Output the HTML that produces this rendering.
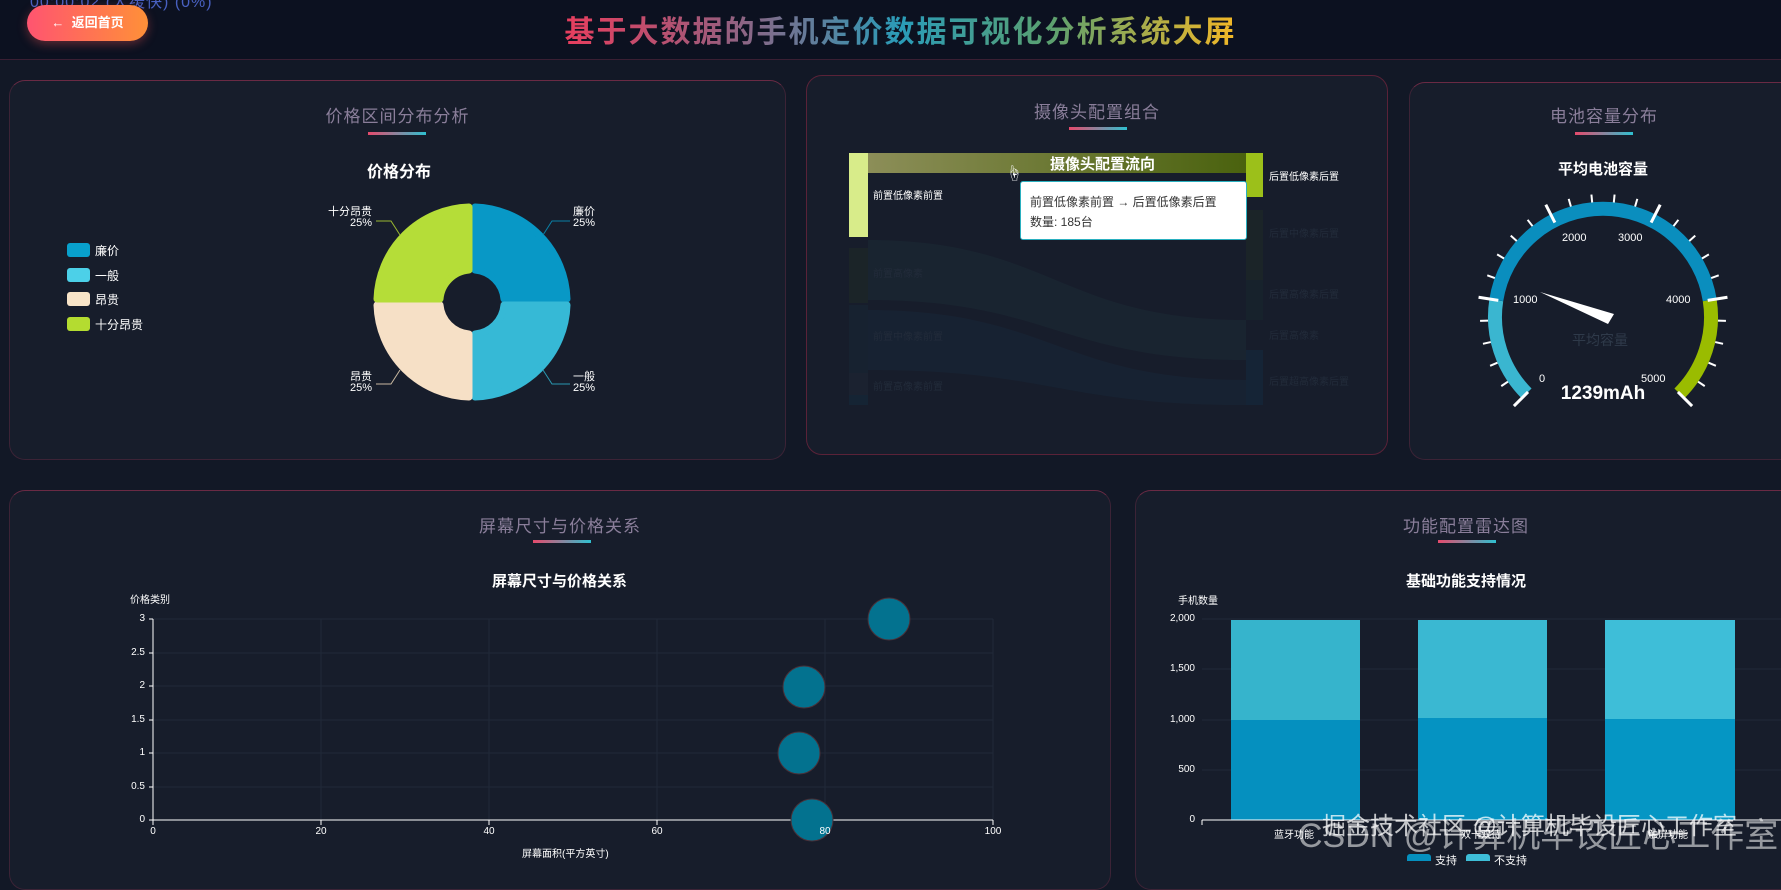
<!DOCTYPE html>
<html><head><meta charset="utf-8">
<style>
*{margin:0;padding:0;box-sizing:border-box}
body{width:1781px;height:861px;overflow:hidden;background:#121826;font-family:"Liberation Sans","Noto Sans CJK SC",sans-serif;color:#fff;position:relative}
.hdr{position:absolute;left:0;top:0;width:1781px;height:60px;background:#0c1120;border-bottom:1px solid #3a1f33}
.panel{position:absolute;background:#171d2b;border:1px solid #3c2336;border-radius:16px;border-top-color:#6a2a44}
.pt{position:absolute;left:0;right:0;text-align:center;font-size:17px;color:#8a7e9a;letter-spacing:1px}
.ul{position:absolute;height:3px;width:58px;background:linear-gradient(90deg,#e64a6c,#2fc0d0)}
.t{position:absolute;white-space:nowrap}
svg{position:absolute;left:0;top:0}
</style></head><body>
<div class="hdr"></div>
<div class="t" style="left:30px;top:-12px;font-size:16px;color:#4860c0;letter-spacing:1px">00:00:02 (大缓快) (0%)</div>
<div style="position:absolute;left:27px;top:5px;width:121px;height:36px;border-radius:18px;background:linear-gradient(90deg,#ff5470,#ff9038);box-shadow:0 3px 10px rgba(255,90,90,.35);font-size:13px;font-weight:bold;line-height:36px;text-align:center">←&nbsp;&nbsp;返回首页</div>
<div class="t" style="left:0;width:1781px;text-align:center;top:7px;padding-left:20px"><span style="display:inline-block;font-size:30px;font-weight:bold;letter-spacing:2px;background:linear-gradient(90deg,#e83e5e 0%,#a05a7a 22%,#2a9cb8 50%,#5aa070 72%,#f4b826 100%);background-clip:text;-webkit-background-clip:text;color:transparent">基于大数据的手机定价数据可视化分析系统大屏</span></div>

<!-- panel 1 -->
<div class="panel" style="left:9px;top:80px;width:777px;height:380px"></div>
<div class="pt" style="left:9px;width:777px;top:102px">价格区间分布分析</div>
<div class="ul" style="left:368px;top:132px"></div>
<div class="t" style="left:367px;top:158px;font-size:16px;font-weight:bold">价格分布</div>
<div style="position:absolute;left:67px;top:243px;width:23px;height:14px;border-radius:3px;background:#08a0cc"></div><div class="t" style="left:95px;top:242px;font-size:12px">廉价</div>
<div style="position:absolute;left:67px;top:268px;width:23px;height:14px;border-radius:3px;background:#4cd0e8"></div><div class="t" style="left:95px;top:267px;font-size:12px">一般</div>
<div style="position:absolute;left:67px;top:292px;width:23px;height:14px;border-radius:3px;background:#f8e4c8"></div><div class="t" style="left:95px;top:291px;font-size:12px">昂贵</div>
<div style="position:absolute;left:67px;top:317px;width:23px;height:14px;border-radius:3px;background:#b4dc30"></div><div class="t" style="left:95px;top:316px;font-size:12px">十分昂贵</div>
<svg width="1781" height="861">
<g stroke-linejoin="round" stroke-width="7">
<path d="M475,207 A95,95 0 0 1 567,299 L504,299 A32,32 0 0 0 475,270 Z" fill="#0898c6" stroke="#0898c6"/>
<path d="M567,305 A95,95 0 0 1 475,397 L475,334 A32,32 0 0 0 504,305 Z" fill="#36b9d6" stroke="#36b9d6"/>
<path d="M469,397 A95,95 0 0 1 377,305 L440,305 A32,32 0 0 0 469,334 Z" fill="#f6e0c6" stroke="#f6e0c6"/>
<path d="M377,299 A95,95 0 0 1 469,207 L469,270 A32,32 0 0 0 440,299 Z" fill="#b5dd38" stroke="#b5dd38"/>
</g>
<g fill="none" stroke-width="1">
<polyline points="543,235 552,221 570,221" stroke="#0a80a6"/>
<polyline points="543,370 552,384 570,384" stroke="#2a98b0"/>
<polyline points="400,235 391,221 376,221" stroke="#9ab830"/>
<polyline points="400,370 391,384 376,384" stroke="#c8b8a0"/>
</g>
</svg>
<div class="t" style="left:573px;top:207px;font-size:11px;line-height:11px">廉价<br>25%</div>
<div class="t" style="left:573px;top:372px;font-size:11px;line-height:11px">一般<br>25%</div>
<div class="t" style="left:322px;width:50px;text-align:right;top:207px;font-size:11px;line-height:11px">十分昂贵<br>25%</div>
<div class="t" style="left:322px;width:50px;text-align:right;top:372px;font-size:11px;line-height:11px">昂贵<br>25%</div>

<!-- panel 2 sankey -->
<div class="panel" style="left:806px;top:75px;width:582px;height:380px;border-color:#5a2238"></div>
<div class="pt" style="left:806px;width:582px;top:98px">摄像头配置组合</div>
<div class="ul" style="left:1069px;top:127px"></div>
<svg width="1781" height="861">
<defs><linearGradient id="sk" x1="0" x2="1"><stop offset="0" stop-color="#8c8e58"/><stop offset="1" stop-color="#4a620e"/></linearGradient></defs>
<rect x="868" y="153" width="378" height="20" fill="url(#sk)"/>
<rect x="849" y="153" width="19" height="84" fill="#d8ec8a"/>
<rect x="1246" y="153" width="17" height="44" fill="#9cc01a"/>
<g opacity="0.12">
<rect x="849" y="248" width="19" height="55" fill="#3a5a1a"/>
<rect x="849" y="305" width="19" height="70" fill="#1a4a5a"/>
<rect x="849" y="373" width="19" height="22" fill="#3a4a5a"/>
<rect x="849" y="395" width="19" height="10" fill="#0a5a7a"/>
<rect x="1246" y="210" width="17" height="70" fill="#3a5a1a"/>
<rect x="1246" y="280" width="17" height="40" fill="#1a4a3a"/>
<rect x="1246" y="350" width="17" height="55" fill="#0a5a8a"/>
<path d="M868,240 C1050,240 1060,320 1246,320 L1246,360 C1060,360 1050,300 868,300 Z" fill="#2a5a5a"/>
<path d="M868,310 C1050,310 1060,380 1246,380 L1246,405 C1060,405 1050,370 868,370 Z" fill="#1a4a6a"/>
</g>
</svg>
<div class="t" style="left:1050px;top:153px;font-size:15px;font-weight:bold;width:97px;text-align:center">摄像头配置流向</div>
<div class="t" style="left:873px;top:187px;font-size:10px">前置低像素前置</div>
<div class="t" style="left:1269px;top:168px;font-size:10px">后置低像素后置</div>
<div class="t" style="left:873px;top:265px;font-size:10px;color:#222b3a">前置高像素</div>
<div class="t" style="left:873px;top:328px;font-size:10px;color:#222b3a">前置中像素前置</div>
<div class="t" style="left:873px;top:378px;font-size:10px;color:#222b3a">前置高像素前置</div>
<div class="t" style="left:1269px;top:225px;font-size:10px;color:#222b3a">后置中像素后置</div>
<div class="t" style="left:1269px;top:286px;font-size:10px;color:#222b3a">后置高像素后置</div>
<div class="t" style="left:1269px;top:327px;font-size:10px;color:#222b3a">后置高像素</div>
<div class="t" style="left:1269px;top:373px;font-size:10px;color:#222b3a">后置超高像素后置</div>
<div style="position:absolute;left:1020px;top:181px;width:227px;height:59px;background:#fff;border:1px solid #2ab0c0;border-radius:3px;color:#333;font-size:12px;padding:10px 0 0 9px;line-height:20px">前置低像素前置 → 后置低像素后置<br>数量: 185台</div>
<div class="t" style="left:1006px;top:160px;font-size:16px;color:#fff">☝</div>

<!-- panel 3 gauge -->
<div class="panel" style="left:1409px;top:82px;width:400px;height:378px"></div>
<div class="pt" style="left:1409px;width:390px;top:102px">电池容量分布</div>
<div class="ul" style="left:1575px;top:132px"></div>
<div class="t" style="left:1553px;top:158px;width:100px;text-align:center;font-size:15px;font-weight:bold">平均电池容量</div>
<svg width="1781" height="861" id="g">
<g fill="none" stroke-width="14">
<path d="M1526.6,393.4 A108,108 0 0 1 1496.3,300.1" stroke="#3ab6d0"/>
<path d="M1496.3,300.1 A108,108 0 0 1 1709.7,300.1" stroke="#0a8ebe"/>
<path d="M1709.7,300.1 A108,108 0 0 1 1679.4,393.4" stroke="#9abc00"/>
</g>
<g id="ticks" stroke="#fff"></g>
<polygon points="1540,292 1614,314 1608,324" fill="#fff"/>
</svg>
<div class="t" style="left:1572px;top:330px;font-size:14px;color:#2f3a4a">平均容量</div>
<div class="t" style="left:1539px;top:373px;font-size:11px">0</div>
<div class="t" style="left:1513px;top:294px;font-size:11px">1000</div>
<div class="t" style="left:1562px;top:232px;font-size:11px">2000</div>
<div class="t" style="left:1618px;top:232px;font-size:11px">3000</div>
<div class="t" style="left:1666px;top:294px;font-size:11px">4000</div>
<div class="t" style="left:1641px;top:373px;font-size:11px">5000</div>
<div class="t" style="left:1553px;width:100px;text-align:center;top:383px;font-size:19px;font-weight:bold">1239mAh</div>

<!-- panel 4 scatter -->
<div class="panel" style="left:9px;top:490px;width:1102px;height:400px"></div>
<div class="pt" style="left:9px;width:1102px;top:512px">屏幕尺寸与价格关系</div>
<div class="ul" style="left:533px;top:540px"></div>
<div class="t" style="left:492px;top:570px;font-size:15px;font-weight:bold">屏幕尺寸与价格关系</div>
<div class="t" style="left:130px;top:591px;font-size:10px">价格类别</div>
<svg width="1781" height="861">
<g stroke="#212938" stroke-width="1">
<line x1="153" y1="619" x2="993" y2="619"/><line x1="153" y1="653" x2="993" y2="653"/><line x1="153" y1="686" x2="993" y2="686"/><line x1="153" y1="720" x2="993" y2="720"/><line x1="153" y1="753" x2="993" y2="753"/><line x1="153" y1="787" x2="993" y2="787"/>
<line x1="321" y1="619" x2="321" y2="820"/><line x1="489" y1="619" x2="489" y2="820"/><line x1="657" y1="619" x2="657" y2="820"/><line x1="825" y1="619" x2="825" y2="820"/><line x1="993" y1="619" x2="993" y2="820"/>
</g>
<g stroke="#fff" stroke-width="1">
<line x1="153" y1="619" x2="153" y2="820"/><line x1="153" y1="820" x2="993" y2="820"/>
<line x1="149" y1="619" x2="153" y2="619"/><line x1="149" y1="653" x2="153" y2="653"/><line x1="149" y1="686" x2="153" y2="686"/><line x1="149" y1="720" x2="153" y2="720"/><line x1="149" y1="753" x2="153" y2="753"/><line x1="149" y1="787" x2="153" y2="787"/><line x1="149" y1="820" x2="153" y2="820"/>
<line x1="153" y1="820" x2="153" y2="825"/><line x1="321" y1="820" x2="321" y2="825"/><line x1="489" y1="820" x2="489" y2="825"/><line x1="657" y1="820" x2="657" y2="825"/><line x1="825" y1="820" x2="825" y2="825"/><line x1="993" y1="820" x2="993" y2="825"/>
</g>
<g fill="#03728f" stroke="#4a3038" stroke-width="1">
<ellipse cx="889" cy="619" rx="21" ry="21"/><ellipse cx="804" cy="687" rx="21" ry="21"/><ellipse cx="799" cy="753" rx="21" ry="21"/><ellipse cx="812" cy="820" rx="21" ry="21"/>
</g>
</svg>
<div class="t" style="left:120px;width:25px;text-align:right;top:613px;font-size:10px">3</div>
<div class="t" style="left:120px;width:25px;text-align:right;top:647px;font-size:10px">2.5</div>
<div class="t" style="left:120px;width:25px;text-align:right;top:680px;font-size:10px">2</div>
<div class="t" style="left:120px;width:25px;text-align:right;top:714px;font-size:10px">1.5</div>
<div class="t" style="left:120px;width:25px;text-align:right;top:747px;font-size:10px">1</div>
<div class="t" style="left:120px;width:25px;text-align:right;top:781px;font-size:10px">0.5</div>
<div class="t" style="left:120px;width:25px;text-align:right;top:814px;font-size:10px">0</div>
<div class="t" style="left:133px;width:40px;text-align:center;top:826px;font-size:10px">0</div>
<div class="t" style="left:301px;width:40px;text-align:center;top:826px;font-size:10px">20</div>
<div class="t" style="left:469px;width:40px;text-align:center;top:826px;font-size:10px">40</div>
<div class="t" style="left:637px;width:40px;text-align:center;top:826px;font-size:10px">60</div>
<div class="t" style="left:805px;width:40px;text-align:center;top:826px;font-size:10px">80</div>
<div class="t" style="left:973px;width:40px;text-align:center;top:826px;font-size:10px">100</div>
<div class="t" style="left:522px;top:845px;font-size:10px">屏幕面积(平方英寸)</div>

<!-- panel 5 bars -->
<div class="panel" style="left:1135px;top:490px;width:700px;height:400px"></div>
<div class="pt" style="left:1135px;width:662px;top:512px">功能配置雷达图</div>
<div class="ul" style="left:1438px;top:540px"></div>
<div class="t" style="left:1406px;top:570px;font-size:15px;font-weight:bold">基础功能支持情况</div>
<div class="t" style="left:1178px;top:592px;font-size:10px">手机数量</div>
<svg width="1781" height="861">
<g stroke="#212938"><line x1="1202" y1="619" x2="1781" y2="619"/><line x1="1202" y1="669" x2="1781" y2="669"/><line x1="1202" y1="720" x2="1781" y2="720"/><line x1="1202" y1="770" x2="1781" y2="770"/></g>
<rect x="1231" y="620" width="129" height="100" fill="#36b4cc"/><rect x="1231" y="720" width="129" height="100" fill="#0590bf"/>
<rect x="1418" y="620" width="129" height="98" fill="#3ab8d2"/><rect x="1418" y="718" width="129" height="102" fill="#0593c2"/>
<rect x="1605" y="620" width="130" height="99" fill="#3ebed8"/><rect x="1605" y="719" width="130" height="101" fill="#0596c4"/>
<line x1="1202" y1="820" x2="1781" y2="820" stroke="#fff"/><line x1="1202" y1="820" x2="1202" y2="825" stroke="#fff"/>
<rect x="1407" y="854" width="24" height="14" rx="3" fill="#0590bf"/><rect x="1466" y="854" width="24" height="14" rx="3" fill="#3ebed8"/>
</svg>
<div class="t" style="left:1150px;width:45px;text-align:right;top:613px;font-size:10px">2,000</div>
<div class="t" style="left:1150px;width:45px;text-align:right;top:663px;font-size:10px">1,500</div>
<div class="t" style="left:1150px;width:45px;text-align:right;top:714px;font-size:10px">1,000</div>
<div class="t" style="left:1150px;width:45px;text-align:right;top:764px;font-size:10px">500</div>
<div class="t" style="left:1150px;width:45px;text-align:right;top:814px;font-size:10px">0</div>
<div class="t" style="left:1274px;top:826px;font-size:10px">蓝牙功能</div>
<div class="t" style="left:1461px;top:826px;font-size:10px">双卡双待</div>
<div class="t" style="left:1648px;top:826px;font-size:10px">触屏功能</div>
<div class="t" style="left:1435px;top:852px;font-size:11px">支持</div>
<div class="t" style="left:1494px;top:852px;font-size:11px">不支持</div>

<div class="t" style="left:1298px;top:808px;font-size:34px;color:rgba(255,255,255,.55)">CSDN @计算机毕设匠心工作室</div>
<div class="t" style="left:1322px;top:806px;font-size:24px;color:rgba(255,255,255,.75)">掘金技术社区 @计算机毕设匠心工作室</div>

<script>
(function(){
var g=document.getElementById('ticks'),cx=1603,cy=317,s='';
for(var i=0;i<=25;i++){
 var a=(225-i*270/25)*Math.PI/180,c=Math.cos(a),n=Math.sin(a);
 var maj=i%5==0,r1=maj?106:115,r2=maj?126:123;
 s+='<line x1="'+(cx+r1*c)+'" y1="'+(cy-r1*n)+'" x2="'+(cx+r2*c)+'" y2="'+(cy-r2*n)+'" stroke-width="'+(maj?3:2)+'"/>';
}
g.innerHTML=s;
})();
</script>
</body></html>
